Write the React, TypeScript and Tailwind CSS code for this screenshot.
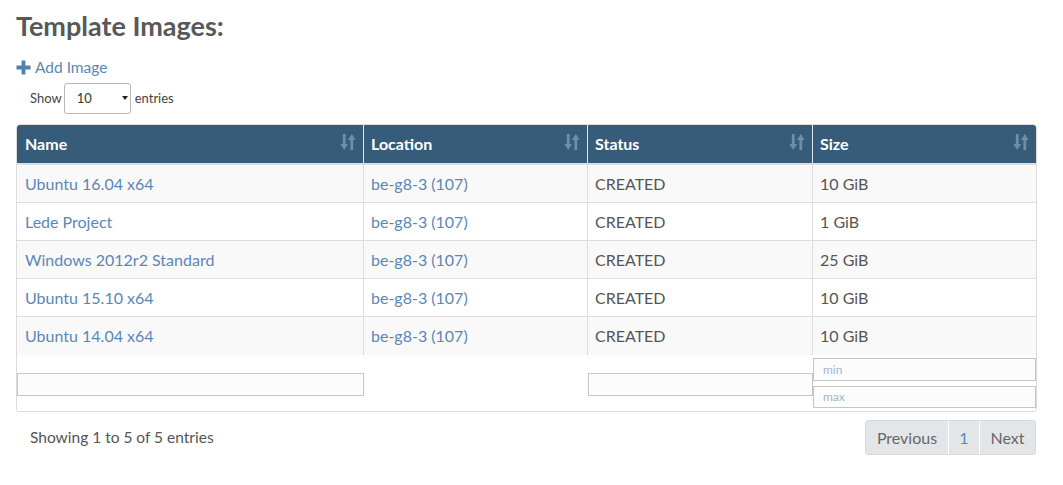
import React from "react";

const rows = [
  ["Ubuntu 16.04 x64", "be-g8-3 (107)", "CREATED", "10 GiB"],
  ["Lede Project", "be-g8-3 (107)", "CREATED", "1 GiB"],
  ["Windows 2012r2 Standard", "be-g8-3 (107)", "CREATED", "25 GiB"],
  ["Ubuntu 15.10 x64", "be-g8-3 (107)", "CREATED", "10 GiB"],
  ["Ubuntu 14.04 x64", "be-g8-3 (107)", "CREATED", "10 GiB"],
];

const cols = "grid grid-cols-[347px_224px_225px_223px]";

function SortIcon() {
  return (
    <svg width="16" height="18" viewBox="0 0 16 18" className="shrink-0">
      <g fill="#6f8ea6">
        <rect x="2.8" y="1" width="2.8" height="11" />
        <path d="M0.4 11 L8 11 L4.2 17 Z" />
        <rect x="10.4" y="6" width="2.8" height="11" />
        <path d="M8 7 L15.6 7 L11.8 1 Z" />
      </g>
    </svg>
  );
}

export default function App() {
  return (
    <div className="w-[1063px] h-[485px] bg-white font-['Lato','Noto_Sans',sans-serif] text-[#555]">
      <div className="pl-4 pt-[9px]">
        <h1 className="text-[27px] font-bold leading-[34px] text-[#58585a]">Template Images:</h1>
        <div className="mt-[14px] flex items-center gap-[4px] text-[15.5px] leading-[20px] text-[#5b87b5]">
          <svg width="15" height="15" viewBox="0 0 15 15">
            <path d="M5.6 0.5 H9.4 V5.6 H14.5 V9.4 H9.4 V14.5 H5.6 V9.4 H0.5 V5.6 H5.6 Z" fill="#4f80b0" />
          </svg>
          <span>Add Image</span>
        </div>
        <div className="mt-[6px] pl-[14px] flex items-center text-[13px] text-[#444]">
          <span>Show</span>
          <div className="ml-[2px] mr-[4px] w-[67px] h-[31px] border border-[#b8b8b8] rounded-[3px] relative flex items-center pl-[12px] text-[13px] text-[#333]">
            10
            <span className="absolute right-[2px] top-[12px] w-0 h-0 border-l-[3px] border-r-[3px] border-t-[4px] border-l-transparent border-r-transparent border-t-[#222]" />
          </div>
          <span>entries</span>
        </div>
      </div>

      <div className="ml-4 mt-[10px] w-[1021px] border border-[#dcdcdc] rounded-t-[4px] rounded-b-[3px] overflow-hidden">
        <div className={`${cols} bg-[#365c79] h-[40px] border-b-2 border-[#dedede]`}>
          {["Name", "Location", "Status", "Size"].map((h, i) => (
            <div
              key={h}
              className={`flex items-center justify-between ${i === 0 ? "pl-[8px]" : "pl-[7px]"} pr-[7px] pb-[1px] text-[16px] font-bold text-white ${i < 3 ? "border-r border-[#e3e7ea]" : ""}`}
            >
              <span>{h}</span>
              <span className="-mt-[4px]"><SortIcon /></span>
            </div>
          ))}
        </div>
        {rows.map((r, ri) => (
          <div key={ri} className={`${cols} h-[38px] ${ri % 2 === 0 ? "bg-[#f9f9f9]" : "bg-white"} ${ri < rows.length - 1 ? "border-b border-[#dddddd]" : ""}`}>
            {r.map((c, ci) => (
              <div
                key={ci}
                className={`flex items-center ${ci === 0 ? "pl-[8px]" : "pl-[7px]"} text-[16px] ${ci < 2 ? "text-[#5b87b5]" : "text-[#555]"} ${ci < 3 ? "border-r border-[#dddddd]" : ""}`}
              >
                {c}
              </div>
            ))}
          </div>
        ))}
        <div className={`${cols} h-[56px] bg-white`}>
          <div className="pt-[18px]">
            <div className="h-[23px] border border-[#c4c6c9] bg-[#fcfcfc]" />
          </div>
          <div />
          <div className="pt-[18px]">
            <div className="h-[23px] border border-[#c4c6c9] bg-[#fcfcfc]" />
          </div>
          <div className="pt-[3px] flex flex-col gap-[5px]">
            <div className="h-[23px] border border-[#c4c6c9] bg-[#fcfcfc] pl-[9px] text-[12px] leading-[21px] text-[#a5b6c8]">min</div>
            <div className="h-[22px] border border-[#c4c6c9] bg-[#fcfcfc] pl-[9px] text-[12px] leading-[20px] text-[#a5b6c8]">max</div>
          </div>
        </div>
      </div>

      <div className="ml-[30px] mr-[27px] mt-[8px] flex items-center justify-between">
        <span className="text-[15.5px] text-[#555]">Showing 1 to 5 of 5 entries</span>
        <div className="flex h-[35px] rounded-[3px] overflow-hidden border border-[#d8dbde] bg-[#e3e6e9] text-[16px]">
          <div className="w-[83px] flex items-center justify-center text-[#666] border-r border-white">Previous</div>
          <div className="w-[31px] flex items-center justify-center text-[#5b87b5] border-r border-white">1</div>
          <div className="w-[55px] flex items-center justify-center text-[#666]">Next</div>
        </div>
      </div>
    </div>
  );
}
